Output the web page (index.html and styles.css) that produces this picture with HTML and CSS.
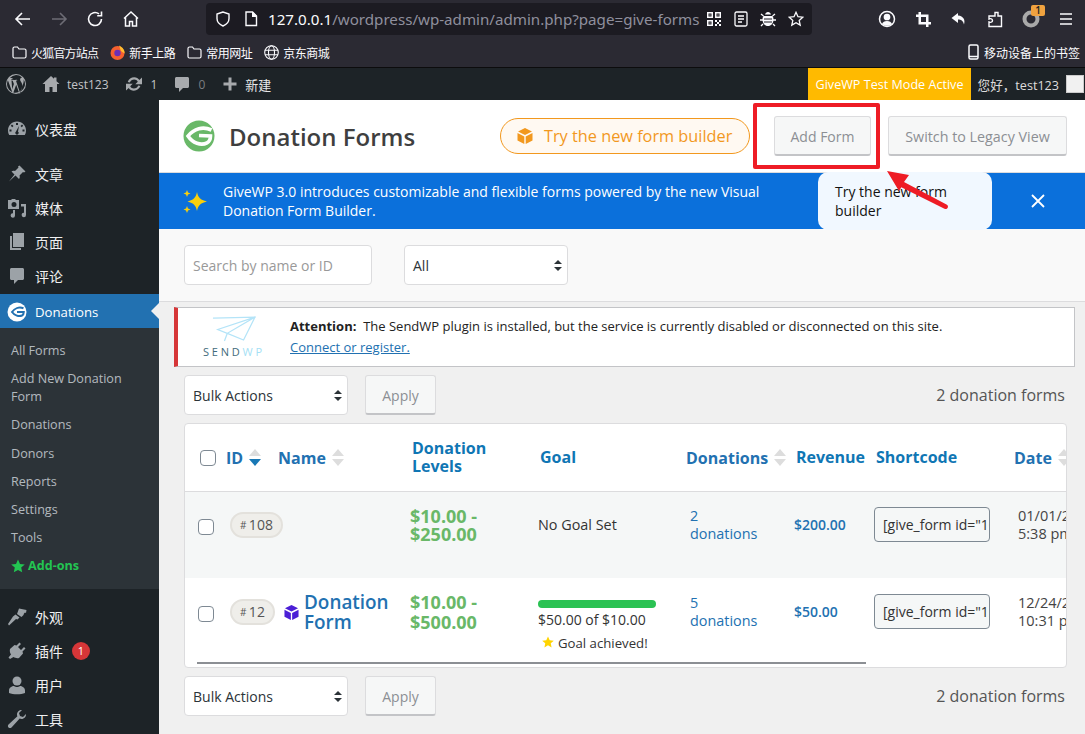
FILE: index.html
```html
<!DOCTYPE html>
<html lang="zh-CN">
<head>
<meta charset="utf-8">
<title>Donation Forms</title>
<link rel="stylesheet" href="styles.css">
</head>
<body>
<div class="browser">
  <div class="toolbar">
    <div class="navgroup">
      <span class="tbtn"><svg width="18" height="18" viewBox="0 0 18 18" fill="none" stroke="#fbfbfe" stroke-width="1.6"><path d="M2 9h14M8 3 2 9l6 6"/></svg></span>
      <span class="tbtn"><svg width="18" height="18" viewBox="0 0 18 18" fill="none" stroke="#6d6c75" stroke-width="1.6"><path d="M16 9H2M10 3l6 6-6 6"/></svg></span>
      <span class="tbtn"><svg width="18" height="18" viewBox="0 0 18 18" fill="none" stroke="#fbfbfe" stroke-width="1.6"><path d="M15.5 9A6.5 6.5 0 1 1 13 3.900"/><path d="M15.5 1.500v4.300h-4.300" /></svg></span>
      <span class="tbtn"><svg width="18" height="18" viewBox="0 0 18 18" fill="none" stroke="#fbfbfe" stroke-width="1.5"><path d="M2 8.500 9 2l7 6.500M3.500 7.500V16h4v-4.500h3V16h4V7.500"/></svg></span>
    </div>
    <div class="urlbar">
      <svg class="ic-shield" width="16" height="16" viewBox="0 0 16 16" fill="none" stroke="#fbfbfe" stroke-width="1.4"><path d="M8 1 2 3v4.500c0 3.500 2.500 6 6 7.500 3.500-1.500 6-4 6-7.500V3z"/></svg>
      <svg class="ic-doc" width="14" height="16" viewBox="0 0 14 16" fill="#fbfbfe"><path fill="none" stroke="#fbfbfe" stroke-width="1.400" d="M2 1h6.500L12.500 5v9.500H2z"/><path d="M8 1h1l4 4v1H8z"/></svg>
      <span class="urltext"><b>127.0.0.1</b>/wordpress/wp-admin/admin.php?page=give-forms</span>
      <span class="urlicons">
        <svg width="16" height="16" viewBox="0 0 16 16" fill="#fbfbfe"><path d="M1 1h6v6H1zm1.500 1.500v3h3v-3zM9 1h6v6H9zm1.500 1.500v3h3v-3zM1 9h6v6H1zm1.500 1.500v3h3v-3zM9 9h2v2H9zm4 0h2v2h-2zm-2 2h2v2h-2zm-2 2h2v2H9zm4 0h2v2h-2zM3.500 3.500h1v1h-1zm8 0h1v1h-1zm-8 8h1v1h-1z"/></svg>
        <svg width="14" height="16" viewBox="0 0 14 16" fill="none" stroke="#fbfbfe" stroke-width="1.300"><rect x="1" y="1" width="12" height="14" rx="1.500"/><path d="M4 5h6M4 8h6M4 11h4"/></svg>
        <svg width="16" height="16" viewBox="0 0 16 16" fill="#fbfbfe"><path d="M5 3.500C5.500 2 6.500 1 8 1s2.500 1 3 2.500zM3.500 5h9c.7 1 1 2 1 3.500 0 4-2.500 6.500-5.500 6.500s-5.500-2.500-5.500-6.500c0-1.500.3-2.500 1-3.500z"/><path stroke="#fbfbfe" stroke-width="1.300" d="M1 3l2.500 2M15 3l-2.500 2M0 9h3M13 9h3M1 15l2-2M15 15l-2-2"/><path stroke="#1c1b22" stroke-width="1.200" d="M4 8h8M4 11h8"/></svg>
        <svg width="16" height="16" viewBox="0 0 16 16" fill="none" stroke="#fbfbfe" stroke-width="1.300"><path d="m8 1.300 2 4.400 4.800.5-3.600 3.200 1 4.700L8 11.700l-4.200 2.400 1-4.700L1.200 6.200 6 5.700z"/></svg>
      </span>
    </div>
    <div class="navgroup right">
      <span class="tbtn"><svg width="18" height="18" viewBox="0 0 18 18" fill="none" stroke="#fbfbfe" stroke-width="1.500"><circle cx="9" cy="9" r="7.500"/><circle cx="9" cy="7" r="2.600" fill="#fbfbfe"/><path fill="#fbfbfe" stroke="none" d="M4 14c.7-2 2.500-3 5-3s4.300 1 5 3c-1.300 1.200-3 1.800-5 1.800S5.300 15.200 4 14z"/></svg></span>
      <span class="tbtn"><svg width="15" height="15" viewBox="0 0 18 18" fill="none" stroke="#fbfbfe" stroke-width="3"><path d="M4.500 0v13.500H18M0 4.500h13.500V18"/></svg></span>
      <span class="tbtn"><svg width="18" height="18" viewBox="0 0 18 18" fill="#fbfbfe"><path d="M8 3 1.500 8 8 13V9.500c3 0 5 1 6 5 1.500-4.500-.5-8.500-6-9z"/></svg></span>
      <span class="tbtn"><svg width="18" height="18" viewBox="0 0 18 18" fill="none" stroke="#fbfbfe" stroke-width="1.400"><path d="M9 2.500h3V6h3.500v10.500H3V12c2.500 1 3.500-.5 3.500-1.500S5.500 8 3 9V6h6z"/></svg></span>
      <span class="tbtn ringbtn"><svg width="18" height="18" viewBox="0 0 18 18" fill="none" stroke="#a9a9a9" stroke-width="4"><circle cx="9" cy="9" r="6.500"/></svg><span class="tbadge">1</span></span>
      <span class="tbtn"><svg width="16" height="14" viewBox="0 0 16 14" fill="none" stroke="#fbfbfe" stroke-width="1.500"><path d="M1 2h12M1 7h12M1 12h12"/></svg></span>
    </div>
  </div>
  <div class="bookmarks">
    <span class="bm"><svg width="15" height="13" viewBox="0 0 15 13" fill="none" stroke="#fbfbfe" stroke-width="1.200"><path d="M1 2.500c0-1 .5-1.500 1.500-1.500h3L7 3h5.500c1 0 1.500.5 1.500 1.500v6c0 1-.5 1.500-1.500 1.500h-10C1.500 12 1 11.500 1 10.500z"/></svg>火狐官方站点</span>
    <span class="bm"><svg width="15" height="15" viewBox="0 0 15 15"><circle cx="7.500" cy="8" r="7" fill="#f5602f"/><path d="M9 .5c4 2 6 5 5.500 8L11 6z" fill="#ffbd2e"/><circle cx="7.500" cy="8" r="3.200" fill="#6b2fb5"/></svg>新手上路</span>
    <span class="bm"><svg width="15" height="13" viewBox="0 0 15 13" fill="none" stroke="#fbfbfe" stroke-width="1.200"><path d="M1 2.500c0-1 .5-1.500 1.500-1.500h3L7 3h5.500c1 0 1.500.5 1.500 1.500v6c0 1-.5 1.500-1.500 1.500h-10C1.500 12 1 11.500 1 10.500z"/></svg>常用网址</span>
    <span class="bm"><svg width="15" height="15" viewBox="0 0 15 15" fill="none" stroke="#fbfbfe" stroke-width="1.100"><circle cx="7.500" cy="7.500" r="6.800"/><ellipse cx="7.500" cy="7.500" rx="3" ry="6.800"/><path d="M1 5.300h13M1 9.700h13"/></svg>京东商城</span>
    <span class="bm mobile"><svg width="11" height="16" viewBox="0 0 11 16" fill="none" stroke="#fbfbfe" stroke-width="1.500"><rect x="1" y="1" width="9" height="14" rx="1.500"/><path d="M1 12.500h9"/></svg>移动设备上的书签</span>
  </div>
</div>

<header class="adminbar">
  <svg class="ab-wp" width="20" height="20" viewBox="0 0 20 20" fill="#a7aaad"><path fill-rule="evenodd" d="M10 0a10 10 0 1 0 0 20 10 10 0 0 0 0-20zm0 1a9 9 0 0 1 6.100 2.400c-1.200 0-2 1-2 2.100 0 1 .6 1.800 1.200 2.800.5.800 1 1.800 1 3.300 0 1-.4 2.200-.9 3.800l-1.200 3.900-4.200-12.600.9-.1c.5 0 .5-.8 0-.8l-2.500.1-2.600-.1c-.5 0-.5.8 0 .8l.9.1 1.200 3.300-1.700 5.200L5.400 4.900l.9-.1c.5 0 .5-.8 0-.8H3.900A9 9 0 0 1 10 1zM1.900 6.300 6.300 18.300A9 9 0 0 1 1.900 6.300zM10.200 10.800l2.600 7.200A9 9 0 0 1 7.400 18.600zM17.700 5.400A9 9 0 0 1 14.300 17.900l2.700-7.700c.5-1.300.7-2.300.7-3.200z"/></svg>
  <span class="ab-item ab-site"><svg width="20" height="20" viewBox="0 0 20 20" fill="#a7aaad"><path d="M10 2 1.500 10H4v8h4.500v-5h3v5H16v-8h2.500l-3-2.800V3.500h-2.500v1.300z"/></svg>test123</span>
  <span class="ab-item ab-upd"><svg width="20" height="20" viewBox="0 0 20 20" fill="#a7aaad"><path d="M10.200 3.300c2.200 0 4.100 1.100 5.200 2.800L18 3.500v6.700h-6.700l2.500-2.500C13.100 6.300 11.800 5.500 10.200 5.500c-2 0-3.700 1.300-4.300 3.100L3.700 7.900c.9-2.700 3.500-4.600 6.500-4.600zM2 9.800h6.700l-2.500 2.500c.7 1.400 2.100 2.200 3.700 2.200 2 0 3.700-1.300 4.300-3.100l2.200.7c-.9 2.700-3.500 4.600-6.500 4.600-2.200 0-4.100-1.100-5.200-2.800L2 16.500z"/></svg><span>1</span></span>
  <span class="ab-item ab-com"><svg width="20" height="20" viewBox="0 0 20 20" fill="#a7aaad"><path d="M4.500 3h11c.8 0 1.500.7 1.500 1.500v8c0 .8-.7 1.500-1.500 1.500H11l-4 4v-4H4.500C3.700 14 3 13.300 3 12.500v-8C3 3.700 3.700 3 4.500 3z"/></svg><span class="dim">0</span></span>
  <span class="ab-item ab-new"><svg width="20" height="20" viewBox="0 0 20 20" fill="#a7aaad"><path d="M8.500 3.500h3v5h5v3h-5v5h-3v-5h-5v-3h5z"/></svg>新建</span>
  <span class="ab-test">GiveWP Test Mode Active</span>
  <span class="ab-hello">您好，test123<i class="ab-avatar"></i></span>
</header>

<div class="layout">
  <nav class="sidebar">
    <ul class="menu top">
      <li class="mi"><svg width="20" height="20" viewBox="0 0 20 20" fill="#9ca2a7"><path fill-rule="evenodd" d="M10 2.500C4.800 2.500 1 6.500 1 11.500c0 1.700.4 3.200 1.200 4.500h15.600c.8-1.300 1.200-2.800 1.200-4.500 0-5-3.800-9-9-9zM9 4h2v2H9zM5 5.500l1.500 1.400-1.300 1.300L3.800 6.800zm10 0 1.200 1.300-1.400 1.400-1.300-1.300zM2.500 10.500h2v2h-2zm13 0h2v2h-2zM12 7l-1 5.500a1.700 1.700 0 1 1-2 0z"/></svg>仪表盘</li>
    </ul>
    <ul class="menu sep">
      <li class="mi"><svg width="20" height="20" viewBox="0 0 20 20" fill="#9ca2a7"><path d="M12.500 1.500 18.500 7.500l-1.500 1-1-.5-3.500 3.500c.5 1.500.3 2.500-.5 3.500l-3.500-3.500-6.500 6 5.500-7-3-3c1-.8 2-1 3.500-.5l3.500-3.500-.5-1z"/></svg>文章</li>
      <li class="mi"><svg width="20" height="20" viewBox="0 0 20 20" fill="#9ca2a7"><path fill-rule="evenodd" d="M1 2h3l1-1h3l1 1h3v9H1zm6 2a2.500 2.500 0 1 0 0 5 2.500 2.500 0 0 0 0-5zm7 2h5v11a2.200 2.200 0 1 1-2-2.200V8.500h-3zM8 12v5.500a2.200 2.200 0 1 1-2-2.200V12z"/></svg>媒体</li>
      <li class="mi"><svg width="20" height="20" viewBox="0 0 20 20" fill="#9ca2a7"><path d="M6 1h11v14H6zM3 4h2v12h9v2H3z"/></svg>页面</li>
      <li class="mi"><svg width="20" height="20" viewBox="0 0 20 20" fill="#9ca2a7"><path d="M4.500 2h11c.8 0 1.500.7 1.500 1.500v9c0 .8-.7 1.500-1.500 1.500H11l-4 4v-4H4.500C3.700 14 3 13.300 3 12.500v-9C3 2.700 3.700 2 4.500 2z"/></svg>评论</li>
      <li class="mi active"><svg width="20" height="20" viewBox="0 0 20 20"><circle cx="10" cy="10" r="9.500" fill="#fff"/><path d="M16.500 6.300C12 4.500 7.500 6.500 5 10c2.500 3.500 7 5 10 3.500 1.300-.7 1.800-2 1.800-3.500H10" fill="none" stroke="#2271b1" stroke-width="2"/></svg>Donations</li>
    </ul>
    <ul class="submenu">
      <li>All Forms</li>
      <li class="two">Add New Donation Form</li>
      <li>Donations</li>
      <li class="donors">Donors</li>
      <li>Reports</li>
      <li>Settings</li>
      <li>Tools</li>
      <li class="addons"><svg width="14" height="14" viewBox="0 0 14 14" fill="#23c552"><path d="m7 .5 2 4.400 4.800.5-3.600 3.200 1 4.700L7 10.900l-4.200 2.400 1-4.700L.2 5.400 5 4.900z"/></svg>Add-ons</li>
    </ul>
    <ul class="menu sep">
      <li class="mi"><svg width="20" height="20" viewBox="0 0 20 20" fill="#9ca2a7"><path d="M12 1.500 19.500 3l-.5 3-1-.5-1 1-.5 1.500-2 2-4.500-3zM8.500 7.500l4 3-2 2-1.500-.5L2 18.500 1 17l5-7.500z"/></svg>外观</li>
      <li class="mi"><svg width="20" height="20" viewBox="0 0 20 20" fill="#9ca2a7"><path d="M12.500 1.500 14 3l-3 3 3 3 3-3 1.500 1.500-3 3 .5 2-4 4.500c-2 .5-4 0-5.500-1L3 18l-1.500-1.500 2.500-3c-1-1.500-1.500-3.500-1-5.500L7.500 4l2 .5z"/></svg>插件<span class="countbadge">1</span></li>
      <li class="mi"><svg width="20" height="20" viewBox="0 0 20 20" fill="#9ca2a7"><circle cx="10" cy="6" r="4.500"/><path d="M2 15.500c0-2.800 3-4.500 5-4.500 1 .8 2 1 3 1s2-.2 3-1c2 0 5 1.700 5 4.500V18c-2 1-5 1.200-8 1.200S4 19 2 18z"/></svg>用户</li>
      <li class="mi"><svg width="20" height="20" viewBox="0 0 20 20" fill="#9ca2a7"><path d="M15 1c-2.500-.3-5 1.700-5 4.500 0 .7.100 1.300.4 1.800L1.500 15.500c-.8.800-.8 2.200 0 3s2.200.8 3 0l8.200-8.900c.5.300 1.100.4 1.800.4 2.800 0 4.800-2.500 4.500-5l-3 3-3-1-1-3z"/></svg>工具</li>
    </ul>
  </nav>

  <main class="content">
    <section class="pagehead">
      <svg class="givelogo" width="32" height="32" viewBox="0 0 32 32"><circle cx="16" cy="16" r="15.500" fill="#69b868"/><path d="M28.500 10C20 6 11 8.500 5 16c4.500 7 13 10 19 6.800 2.500-1.300 3.500-3.800 3.500-6.800L16 15.500" fill="none" stroke="#fff" stroke-width="3.600"/></svg>
      <h1>Donation Forms</h1>
      <div class="headbtns">
        <a class="trybtn"><svg width="16" height="16" viewBox="0 0 16 16" fill="#f2981e"><path d="M8 0 15 3.500 8 7 1 3.500zM.5 5 7.300 8.500V16L.5 12.500zM15.500 5 8.700 8.500V16l6.800-3.500z"/></svg>Try the new form builder</a>
        <button class="wpbtn addform">Add Form</button>
        <button class="wpbtn legacy">Switch to Legacy View</button>
      </div>
    </section>

    <section class="banner">
      <svg width="25" height="25" viewBox="0 0 25 25" fill="#f8cf0d"><path d="M14 3c1 5 3 8 10 9.500-7 1.500-9 4.500-10 9.500-1-5-3-8-9.500-9.500C11 11 13 8 14 3zM4 1l1 2.500L7.500 4.500 5 5.500 4 8 3 5.500.5 4.500 3 3.500zM4 17l1 2.500 2.500 1L5 21.500 4 24l-1-2.500-2.500-1L3 19.500z"/></svg>
      <p>GiveWP 3.0 introduces customizable and flexible forms powered by the new Visual Donation Form Builder.</p>
      <svg class="closex" width="14" height="14" viewBox="0 0 14 14" fill="none" stroke="#fff" stroke-width="1.800"><path d="m1 1 12 12M13 1 1 13"/></svg>
    </section>

    <section class="filters">
      <input class="search" type="text" placeholder="Search by name or ID">
      <div class="fakeselect allsel">All<i class="updown"></i></div>
    </section>

    <section class="notice">
      <div class="sendwp">
        <svg width="44" height="27" viewBox="0 0 46 28" fill="none" stroke="#b4e4f8" stroke-width="1.300"><path d="M1 2 45 1 16 18 33 25 45 1M45 1 6 14 16 18 13 26"/></svg>
        <span class="swtext">SEND<em>WP</em></span>
      </div>
      <div class="noticetext">
        <p><b>Attention:</b>&nbsp; The SendWP plugin is installed, but the service is currently disabled or disconnected on this site.</p>
        <a>Connect or register.</a>
      </div>
    </section>

    <section class="bulkrow">
      <div class="fakeselect bulk">Bulk Actions<i class="updown"></i></div>
      <button class="wpbtn apply">Apply</button>
      <span class="count">2 donation forms</span>
    </section>

    <section class="tablecard">
      <div class="grid thead">
        <div><input class="cb" type="checkbox"></div>
        <div class="sortable"><a>ID</a><i class="sort desc"></i></div>
        <div class="sortable"><a>Name</a><i class="sort"></i></div>
        <div class="th">Donation Levels</div>
        <div class="th">Goal</div>
        <div class="sortable"><a>Donations</a><i class="sort"></i></div>
        <div class="th">Revenue</div>
        <div class="th">Shortcode</div>
        <div class="sortable"><a>Date</a><i class="sort"></i></div>
      </div>
      <div class="grid row odd">
        <div><input class="cb" type="checkbox"></div>
        <div><span class="pill"><small>#</small>108</span></div>
        <div></div>
        <div class="amount">$10.00 - $250.00</div>
        <div class="goaltext">No Goal Set</div>
        <div class="link">2 donations</div>
        <div class="rev">$200.00</div>
        <div class="sccell"><input class="sc" type="text" readonly value='[give_form id="108"]'></div>
        <div class="date">01/01/2023<br>5:38 pm</div>
      </div>
      <div class="grid row even">
        <div><input class="cb" type="checkbox"></div>
        <div><span class="pill"><small>#</small>12</span></div>
        <div class="namecell"><svg width="15" height="15" viewBox="0 0 16 16" fill="#4b1fd6"><path d="M8 0 15 3.500 8 7 1 3.500zM.5 5 7.300 8.500V16L.5 12.500zM15.500 5 8.700 8.500V16l6.800-3.500z"/></svg><a>Donation Form</a></div>
        <div class="amount">$10.00 - $500.00</div>
        <div class="goalcell">
          <div class="bar"></div>
          <div class="goaltext">$50.00 of $10.00</div>
          <div class="achieved"><svg width="12" height="12" viewBox="0 0 14 14" fill="#ffd400"><path d="m7 .5 2 4.400 4.800.5-3.600 3.200 1 4.700L7 10.900l-4.200 2.400 1-4.700L.2 5.400 5 4.900z"/></svg>Goal achieved!</div>
        </div>
        <div class="link">5 donations</div>
        <div class="rev">$50.00</div>
        <div class="sccell"><input class="sc" type="text" readonly value='[give_form id="12"]'></div>
        <div class="date">12/24/2022<br>10:31 pm</div>
      </div>
      <div class="hscroll"></div>
    </section>

    <section class="bulkrow lower">
      <div class="fakeselect bulk">Bulk Actions<i class="updown"></i></div>
      <button class="wpbtn apply">Apply</button>
      <span class="count">2 donation forms</span>
    </section>
  </main>
</div>

<div class="tooltip">Try the new form builder</div>
<div class="redbox"></div>
<svg class="redarrow" width="70" height="46" viewBox="0 0 70 46"><path d="M2 1 24 5 19 12 61.500 34.500c3 1.500 1 5.500-2 4.300L16.300 17.300 14 21z" fill="#ee1c25"/></svg>
</body>
</html>
```

FILE: styles.css
```css
* { box-sizing: border-box; }
html, body { margin: 0; padding: 0; }
body {
  width: 1085px;
  height: 734px;
  overflow: hidden;
  position: relative;
  font-family: "Open Sans", "Noto Sans CJK SC", sans-serif;
  font-size: 14px;
  color: #3c434a;
  background: #f0f0f0;
}
ul { list-style: none; margin: 0; padding: 0; }
p, h1 { margin: 0; }
svg { display: block; flex: none; }

/* browser chrome */
.browser { height: 68px; background: #2b2a33; border-bottom: 1px solid #0c0c0d; }
.toolbar { height: 37px; display: flex; align-items: flex-start; padding: 3px 0 0 5px; }
.navgroup { display: flex; height: 32px; }
.navgroup.right { margin-left: 57px; }
.tbtn { width: 36px; height: 32px; display: flex; align-items: center; justify-content: center; position: relative; }
.tbadge {
  position: absolute; left: 18px; top: 2px; width: 14px; height: 11px;
  background: #f0a23f; color: #222; font-size: 10px; line-height: 11px; text-align: center; border-radius: 2px; font-weight: 600;
}
.urlbar {
  width: 608px; height: 32px; margin-left: 57px; background: #1c1b22; border-radius: 4px;
  display: flex; align-items: center; padding-left: 9px; color: #8f8f9d;
}
.ic-doc { margin-left: 13px; }
.urltext { margin-left: 10px; font-size: 15.150px; white-space: nowrap; font-family: "Noto Sans", sans-serif; }
.urltext b { font-weight: 400; color: #fbfbfe; }
.urlicons { margin-left: auto; display: flex; gap: 12px; padding-right: 8px; align-items: center; }
.bookmarks {
  height: 30px; display: flex; align-items: center; padding: 0 5px 0 12px;
  color: #fbfbfe; font-size: 12px; font-family: "Noto Sans CJK SC", sans-serif;
}
.bm { display: flex; align-items: center; gap: 4px; margin-right: 12px; white-space: nowrap; letter-spacing: -.5px; }
.bm:first-child { letter-spacing: -.8px; }
.bm.mobile { margin: 0 0 0 auto; letter-spacing: 0; gap: 5px; }

/* admin bar */
.adminbar { height: 32px; background: #1d2327; display: flex; align-items: center; color: #c3c4c7; font-size: 12.600px; padding-left: 6px; }
.ab-item { display: flex; align-items: center; white-space: nowrap; }
.ab-site { margin-left: 15px; gap: 6px; font-size: 12px; }
.ab-upd { margin-left: 15px; gap: 7px; }
.ab-upd span { font-size: 12px; }
.ab-com { margin-left: 15px; gap: 6px; }
.dim { font-size: 12px; color: #7a7d81; }
.ab-new { margin-left: 15px; gap: 5px; color: #e6e7e8; font-size: 13px; }
.ab-test { margin-left: auto; width: 163px; height: 32px; line-height: 34px; text-align: center; background: #ffba00; color: #fff; white-space: nowrap; }
.ab-hello { display: flex; align-items: center; justify-content: flex-end; width: 114px; padding-right: 1px; color: #ddd; white-space: nowrap; gap: 7px; }
.ab-avatar { width: 18px; height: 18px; background: #f1f1f1; border: 1px solid #ccc; display: block; }

/* layout */
.layout { display: flex; height: 634px; }
.sidebar { width: 159px; flex: none; background: #1d2327; padding-top: 12px; color: #fff; overflow: hidden; }
.menu.sep { margin-top: 11px; }
.mi { height: 34px; display: flex; align-items: center; padding-left: 7px; gap: 8px; font-size: 14px; position: relative; color: #f0f0f1; }
.mi.active { background: #2271b1; color: #fff; margin-top: 1px; padding-top: 2px; font-size: 13.200px; }
.mi.active::after {
  content: ""; position: absolute; right: 0; top: 9px;
  border: 8px solid transparent; border-right-color: #f0f0f0; border-left: 0;
}
.submenu { background: #2c3338; padding: 9px 0 9px; font-size: 12.600px; color: rgba(240,246,252,.7); }
.submenu li { min-height: 28px; padding: 5px 12px 5px 11px; line-height: 18px; }
.submenu li.two { padding-right: 20px; }
.submenu li.donors { margin-top: 1px; }
.submenu li.addons { display: flex; align-items: center; gap: 3px; color: #23c552; font-weight: 700; }
.countbadge {
  width: 18px; height: 18px; border-radius: 9px; background: #d63638; color: #fff; font-size: 11px;
  line-height: 18px; text-align: center; margin-left: 1px;
}

/* main */
.content { flex: 1; min-width: 0; display: flex; flex-direction: column; }
.pagehead { height: 73px; background: #fff; display: flex; align-items: center; padding: 0 18px 0 24px; border-bottom: 1px solid #dcdcde; }
.pagehead h1 { font-size: 24px; font-weight: 600; margin-left: 14px; color: #3f3f3f; white-space: nowrap; }
.headbtns { margin-left: auto; display: flex; align-items: center; }
.trybtn {
  width: 250px; height: 36px; border: 1px solid #f2981e; border-radius: 18px; background: #fff9f2; color: #f2981e;
  font-size: 16.300px; display: flex; align-items: center; gap: 11px; padding-left: 16px; white-space: nowrap;
}
.wpbtn {
  font-family: inherit; font-size: 14px; color: #8c8f94; background: #f6f7f7; border: 1px solid #dcdcde;
  border-bottom-color: #c3c4c7; border-bottom-width: 2px; border-radius: 3px; height: 40px; padding: 2px 0 0; white-space: nowrap;
}
.addform { width: 97px; margin-left: 24px; }
.legacy { width: 179px; margin-left: 17px; font-size: 14.300px; }

.banner { height: 56px; background: #0b70db; color: #fff; display: flex; align-items: center; padding-left: 24px; }
.banner p { width: 560px; margin-left: 15px; line-height: 19px; }
.closex { margin-left: 248px; }

.filters { height: 73px; background: #f9f9f9; border-bottom: 1px solid #dcdcde; display: flex; align-items: center; padding: 0 0 1px 25px; }
.search {
  width: 188px; height: 40px; border: 1px solid #dcdcde; border-radius: 4px; background: #fff; font: 14px "Open Sans", sans-serif; padding: 2px 8px 0;
}
.search::placeholder { color: #999; opacity: 1; }
.fakeselect {
  height: 40px; background: #fff; border: 1px solid #dcdcde; border-radius: 4px; display: flex; align-items: center;
  padding-left: 8px; font-size: 14px; color: #2c3338; position: relative;
}
.allsel { width: 164px; margin-left: 32px; padding-top: 2px; }
.bulk { width: 164px; }
.updown { position: absolute; right: 5px; top: 14px; width: 8px; height: 11px; }
.updown::before, .updown::after { content: ""; position: absolute; left: 0; border: 4px solid transparent; }
.updown::before { border-bottom-color: #2c3338; border-top: 0; top: 0; }
.updown::after { bottom: 0; border-top-color: #2c3338; border-bottom: 0; }

.notice {
  margin: 5px 10px 0 15px; height: 60px; background: #fff; border: 1px solid #c3c4c7; border-left: 4px solid #d63638;
  display: flex; align-items: center; font-size: 13px;
}
.sendwp { width: 112px; flex: none; display: flex; flex-direction: column; align-items: center; gap: 3px; }
.swtext { font-size: 11px; letter-spacing: 2.800px; color: #3f6b7c; line-height: 12px; }
.swtext em { font-style: normal; color: #a5dff5; }
.noticetext { line-height: 21px; color: #222; }
.noticetext p { white-space: nowrap; }
.noticetext a { color: #2271b1; text-decoration: underline; }

.bulkrow { margin: 8px 20px 0 25px; height: 40px; display: flex; align-items: center; flex: none; }
.bulkrow.lower { margin-top: 8px; }
.apply { width: 71px; margin-left: 17px; font-size: 14px; }
.count { margin-left: auto; font-size: 16px; color: #555; }

.tablecard { margin: 8px 18px 0 25px; height: 245px; background: #fff; border: 1px solid #dcdcde; border-radius: 4px; overflow: hidden; flex: none; position: relative; }
.grid { display: grid; grid-template-columns: 45px 54px 126px 128px 152px 104px 80px 144px 110px; width: 943px; }
.thead { height: 68px; align-items: center; border-bottom: 1px solid #dcdcde; font-weight: 700; font-size: 16px; color: #0f76b4; line-height: 18px; }
.thead > div:first-child { padding-left: 15px; }
.thead > div:nth-child(2) { margin-left: -4px; }
.thead > div:nth-child(3) { margin-left: -6px; }
.thead > div:nth-child(4) { margin-left: 2px; width: 90px; }
.thead > div:nth-child(5) { margin-left: 2px; }
.thead > div:nth-child(6) { margin-left: -4px; }
.thead > div:nth-child(7) { margin-left: 2px; }
.thead > div:nth-child(8) { margin-left: 2px; }
.thead > div:nth-child(9) { margin-left: -4px; }
.th { margin-bottom: 2px; }
.sortable { display: flex; align-items: center; gap: 6px; color: #2271b1; }
.sort { width: 12px; height: 17px; position: relative; display: block; }
.sort::before, .sort::after { content: ""; position: absolute; left: 0; border: 6px solid transparent; }
.sort::before { top: 0; border-top: 0; border-bottom: 7px solid #ddd; }
.sort::after { bottom: 0; border-bottom: 0; border-top: 7px solid #ddd; }
.sort.desc::after { border-top-color: #1878b5; }
.cb {
  appearance: none; width: 16px; height: 16px; margin: 0; border: 1px solid #7e8993; border-radius: 4px; background: #fff; display: block;
}
.row { grid-template-rows: 34px; align-items: center; }
.row > div:first-child { padding: 3px 0 0 13px; }
.even > div:first-child { padding-top: 3px; }
.odd { background: #f5f7f7; padding: 16px 0 36px; }
.even { background: #fff; padding: 17px 0 33px; }
.odd > .goaltext, .row .rev, .row .sccell { margin-top: -2px; }
.pill {
  display: inline-block; height: 26px; padding: 0 8px; border-radius: 13px; border: 2px solid #e3e1dc; background: #efeeea;
  line-height: 22px; font-size: 14px; color: #555; letter-spacing: .2px; white-space: nowrap;
}
.pill small { font-size: 10px; margin-right: 2px; vertical-align: 1px; }
.namecell { display: flex; align-items: center; gap: 5px; }
.namecell a { font-size: 18.900px; line-height: 20px; font-weight: 600; color: #2271b1; }
.amount { font-size: 18px; font-weight: 700; line-height: 18px; color: #69b868; width: 100px; }
.even .amount { line-height: 20px; }
.goaltext { font-size: 14.400px; color: #333; white-space: nowrap; }
.goalcell { align-self: start; margin-top: 5px; }
.bar { width: 118px; height: 8px; border-radius: 4px; background: #2bc253; margin-bottom: 3px; }
.goalcell .goaltext { line-height: 18px; font-size: 14px; }
.achieved { font-size: 13.200px; color: #333; display: flex; align-items: center; gap: 4px; margin: 5px 0 0 4px; white-space: nowrap; line-height: 18px; }
.achieved svg { margin-top: -3px; }
.link { font-size: 14.400px; line-height: 18px; color: #2271b1; width: 76px; }
.rev { font-size: 14px; color: #2271b1; font-weight: 600; }
.sc {
  width: 116px; height: 35px; border: 1px solid #7e8993; border-radius: 4px; background: #f5f7f7; color: #333;
  font: 14px "Open Sans", sans-serif; padding: 0 0 0 8px;
}
.date { font-size: 14.500px; line-height: 18px; color: #444; white-space: nowrap; }
.hscroll { width: 669px; height: 2px; margin-left: 12px; background: #8c8f94; }

/* annotation overlays */
.tooltip {
  position: absolute; left: 818px; top: 172px; width: 174px; height: 58px; padding: 10px 17px; background: #f1f8ff;
  border-radius: 10px; color: #111; font-size: 14px; line-height: 19px;
}
.redbox { position: absolute; left: 753px; top: 103px; width: 127px; height: 66px; border: 4px solid #ee1c25; border-radius: 2px; }
.redarrow { position: absolute; left: 885px; top: 170px; }
```
